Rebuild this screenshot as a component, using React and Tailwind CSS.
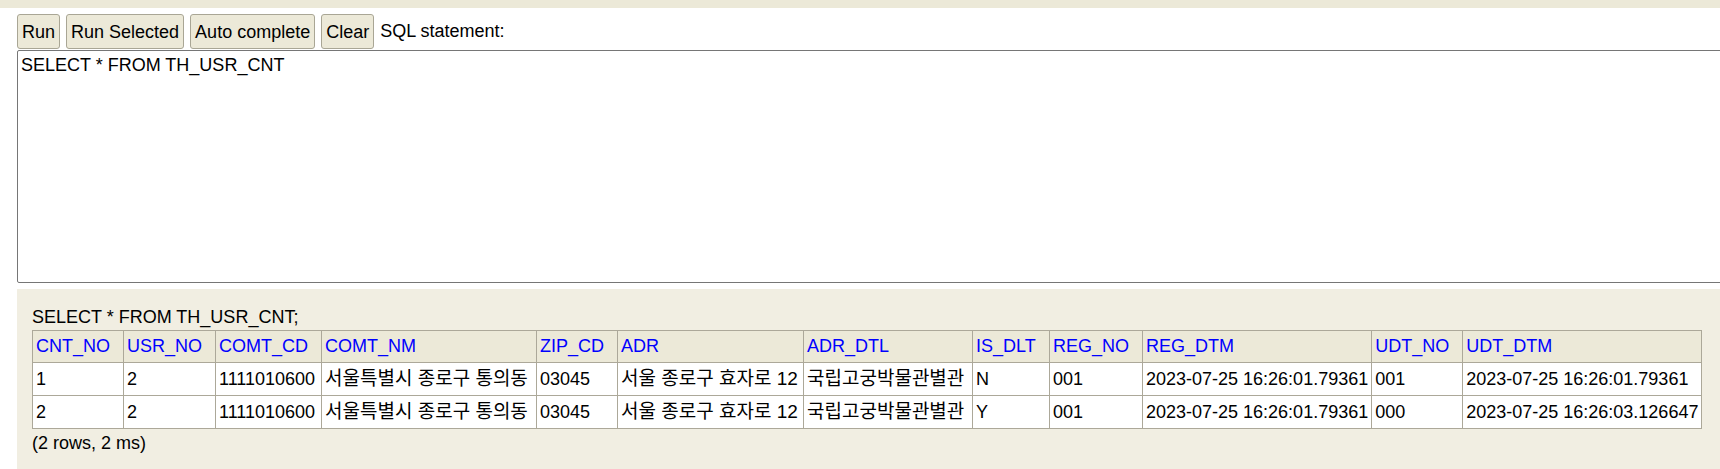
import { useState } from 'react'

const columns = [
  { name: 'CNT_NO', w: 'w-[91px]' },
  { name: 'USR_NO', w: 'w-[92px]' },
  { name: 'COMT_CD', w: 'w-[106px]' },
  { name: 'COMT_NM', w: 'w-[215px]' },
  { name: 'ZIP_CD', w: 'w-[81px]' },
  { name: 'ADR', w: 'w-[186px]' },
  { name: 'ADR_DTL', w: 'w-[169px]' },
  { name: 'IS_DLT', w: 'w-[77px]' },
  { name: 'REG_NO', w: 'w-[93px]' },
  { name: 'REG_DTM', w: 'w-[229px]' },
  { name: 'UDT_NO', w: 'w-[91px]' },
  { name: 'UDT_DTM', w: 'w-[239px]' },
]

const rows = [
  ['1', '2', '1111010600', '서울특별시 종로구 통의동', '03045', '서울 종로구 효자로 12', '국립고궁박물관별관', 'N', '001', '2023-07-25 16:26:01.79361', '001', '2023-07-25 16:26:01.79361'],
  ['2', '2', '1111010600', '서울특별시 종로구 통의동', '03045', '서울 종로구 효자로 12', '국립고궁박물관별관', 'Y', '001', '2023-07-25 16:26:01.79361', '000', '2023-07-25 16:26:03.126647'],
]

const buttons = ['Run', 'Run Selected', 'Auto complete', 'Clear']

// hangul cells render a bit narrower with Noto than in the original, so bump the size
const isKorean = (v) => /[가-힣]/.test(v)

export default function App() {
  const [sql, setSql] = useState('SELECT * FROM TH_USR_CNT')

  return (
    <div className="w-full min-h-[469px] overflow-hidden bg-white text-black text-[18px] font-['Liberation_Sans','Arial','Noto_Sans_CJK_KR',sans-serif]">
      {/* top strip */}
      <div className="h-2 bg-[#ece9d8]" />

      <div className="pl-[17px] pt-[6px]">
        {/* toolbar */}
        <div className="flex items-center gap-[6px] h-[35px]">
          {buttons.map((b) => (
            <button
              key={b}
              className="h-[35px] px-1 border border-[#a9a695] rounded-[3px] bg-[#ece9d8] leading-none whitespace-nowrap"
            >
              {b}
            </button>
          ))}
          <span className="whitespace-nowrap">SQL statement:</span>
        </div>

        {/* editor */}
        <textarea
          value={sql}
          onChange={(e) => setSql(e.target.value)}
          className="block mt-px w-[1760px] h-[233px] px-[3px] py-[4px] border border-[#767676] rounded-[2px] resize-none outline-none leading-[21px]"
        />

        {/* result */}
        <div className="mt-[6px] w-[1760px] h-[200px] bg-[#f1eee2] pl-[15px] pt-[18px]">
          <div className="leading-[21px]">SELECT * FROM TH_USR_CNT;</div>
          <table className="mt-[2px] border-collapse whitespace-nowrap">
            <thead>
              <tr className="bg-[#ece9d8]">
                {columns.map((c) => (
                  <th
                    key={c.name}
                    className={`${c.w} border border-[#aca899] px-[3px] h-[32px] text-left font-normal text-[#0000ff] leading-[21px]`}
                  >
                    {c.name}
                  </th>
                ))}
              </tr>
            </thead>
            <tbody>
              {rows.map((r, i) => (
                <tr key={i} className="bg-white">
                  {r.map((v, j) => (
                    <td key={j} className="border border-[#aca899] px-[3px] h-[33px] leading-[21px]">
                      {isKorean(v) ? <span className="text-[19px]">{v}</span> : v}
                    </td>
                  ))}
                </tr>
              ))}
            </tbody>
          </table>
          <div className="mt-[4px] leading-[21px]">(2 rows, 2 ms)</div>
        </div>
      </div>
    </div>
  )
}
